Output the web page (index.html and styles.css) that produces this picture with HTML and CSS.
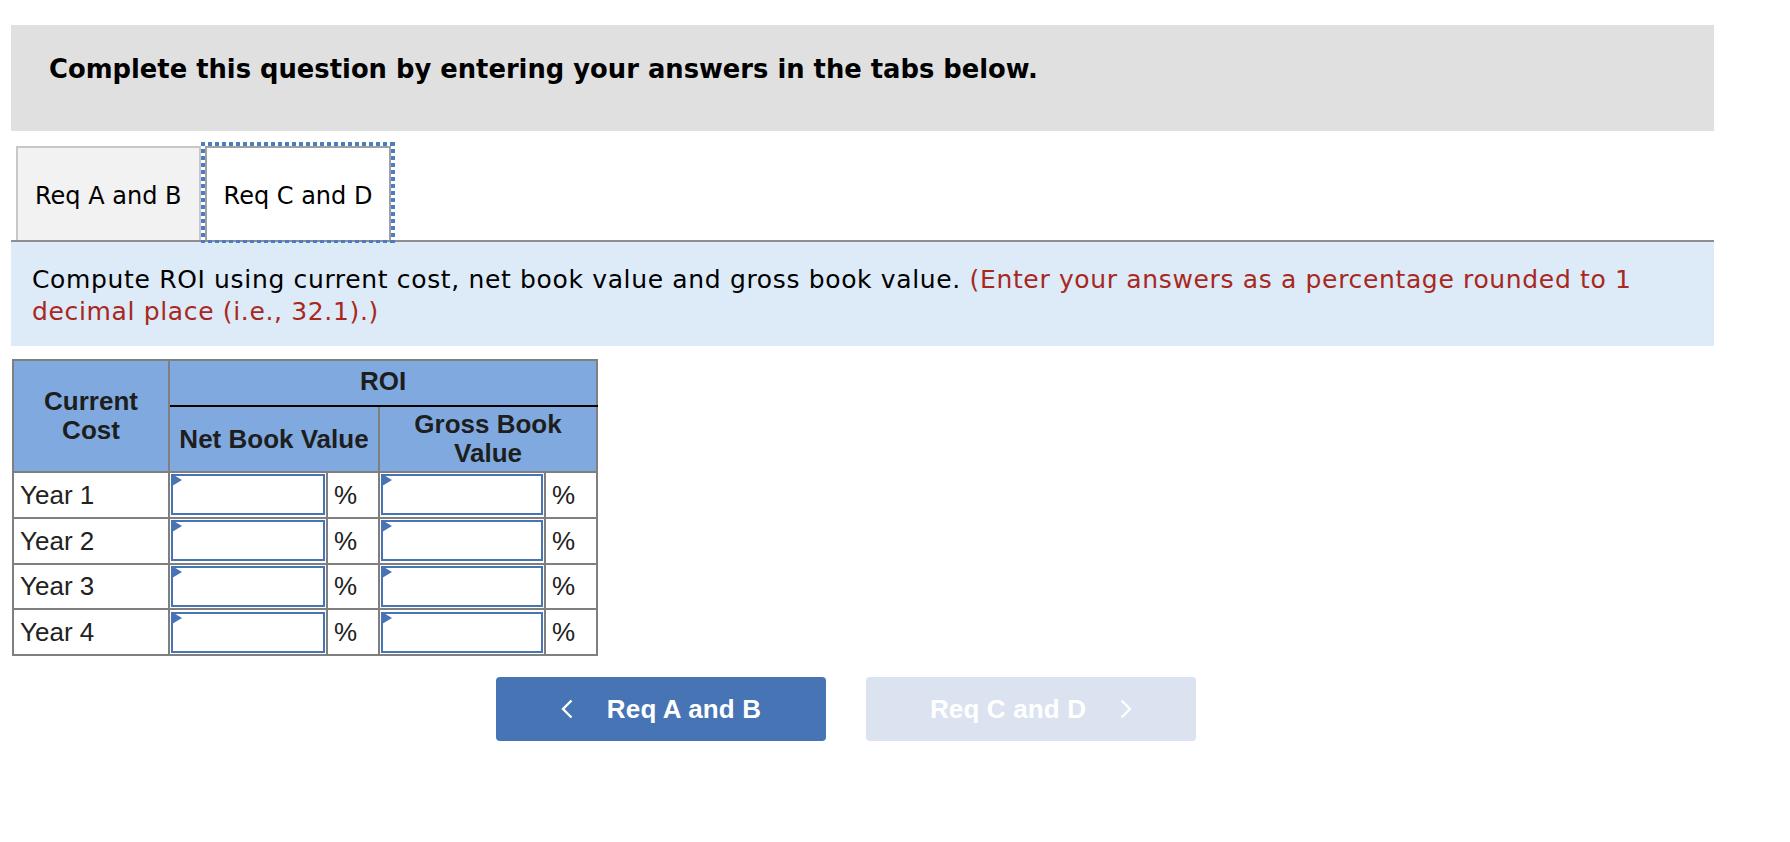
FILE: index.html
```html
<!DOCTYPE html>
<html lang="en">
<head>
<meta charset="utf-8">
<title>ROI</title>
<link rel="stylesheet" href="styles.css">
</head>
<body>
<div class="page">
  <div class="prompt">
    <h2 class="prompt-title">Complete this question by entering your answers in the tabs below.</h2>
  </div>

  <div class="tabs">
    <div class="tab">Req A and B</div>
    <div class="tab tab-active">Req C and D</div>
  </div>

  <div class="instructions">Compute ROI using current cost, net book value and gross book value. <span class="hint">(Enter your answers as a percentage rounded to 1 decimal place (i.e., 32.1).)</span></div>

  <table class="roi">
    <colgroup>
      <col class="c-label">
      <col class="c-input">
      <col class="c-pct">
      <col class="c-input2">
      <col class="c-pct">
    </colgroup>
    <thead>
      <tr class="hr1">
        <th rowspan="2">Current<br>Cost</th>
        <th colspan="4" class="h-roi">ROI</th>
      </tr>
      <tr class="hr2">
        <th colspan="2">Net Book Value</th>
        <th colspan="2">Gross Book<br>Value</th>
      </tr>
    </thead>
    <tbody>
      <tr>
        <td class="label">Year 1</td>
        <td class="inp"><span class="field"><input type="text" aria-label="Year 1 net book value"></span></td>
        <td class="pct">%</td>
        <td class="inp"><span class="field"><input type="text" aria-label="Year 1 gross book value"></span></td>
        <td class="pct">%</td>
      </tr>
      <tr>
        <td class="label">Year 2</td>
        <td class="inp"><span class="field"><input type="text" aria-label="Year 2 net book value"></span></td>
        <td class="pct">%</td>
        <td class="inp"><span class="field"><input type="text" aria-label="Year 2 gross book value"></span></td>
        <td class="pct">%</td>
      </tr>
      <tr>
        <td class="label">Year 3</td>
        <td class="inp"><span class="field"><input type="text" aria-label="Year 3 net book value"></span></td>
        <td class="pct">%</td>
        <td class="inp"><span class="field"><input type="text" aria-label="Year 3 gross book value"></span></td>
        <td class="pct">%</td>
      </tr>
      <tr>
        <td class="label">Year 4</td>
        <td class="inp"><span class="field"><input type="text" aria-label="Year 4 net book value"></span></td>
        <td class="pct">%</td>
        <td class="inp"><span class="field"><input type="text" aria-label="Year 4 gross book value"></span></td>
        <td class="pct">%</td>
      </tr>
    </tbody>
  </table>

  <div class="nav">
    <button class="nav-btn prev" type="button">
      <svg class="chev" width="12" height="20" viewBox="0 0 12 20"><polyline points="10.5,1.5 2,10 10.5,18.5" fill="none" stroke="#fff" stroke-width="2.4"/></svg>
      <span>Req A and B</span>
    </button>
    <button class="nav-btn next" type="button" disabled>
      <span>Req C and D</span>
      <svg class="chev" width="12" height="20" viewBox="0 0 12 20"><polyline points="1.5,1.5 10,10 1.5,18.5" fill="none" stroke="#fff" stroke-width="2.4"/></svg>
    </button>
  </div>
</div>
</body>
</html>
```

FILE: styles.css
```css
* {
  box-sizing: border-box;
}

body {
  margin: 0;
  background: #fff;
  color: #000;
  font-family: "DejaVu Sans", Verdana, sans-serif;
}

.page {
  margin-left: 11px;
  width: 1703px;
  padding-top: 25px;
}

.prompt {
  background: #e0e0e0;
  height: 106px;
  padding: 29px 0 0 38px;
}

.prompt-title {
  margin: 0;
  font-size: 25.8px;
  line-height: 30px;
  font-weight: bold;
}

.tabs {
  display: flex;
  height: 96px;
  margin-top: 15px;
  padding-left: 5px;
  border-bottom: 2px solid #8e8e8e;
}

.tab {
  display: flex;
  align-items: center;
  padding: 4px 17px 0;
  margin-right: 4px;
  border: 2px solid #c8c8c8;
  border-bottom: none;
  background: #f2f2f2;
  font-size: 24px;
  color: #000;
}

.tab-active {
  position: relative;
  background: #fff;
  border-color: #a0a0a0;
}

.tab-active::after {
  content: "";
  position: absolute;
  top: -6px;
  left: -6px;
  right: -6px;
  bottom: -3px;
  pointer-events: none;
  background:
    repeating-linear-gradient(to right, #4b7cc4 0 4px, transparent 4px 7px) top left / 100% 4px no-repeat,
    repeating-linear-gradient(to right, #4b7cc4 0 4px, transparent 4px 7px) bottom left / 100% 3px no-repeat,
    repeating-linear-gradient(to bottom, #4b7cc4 0 4px, transparent 4px 7px) top left / 4px 100% no-repeat,
    repeating-linear-gradient(to bottom, #4b7cc4 0 4px, transparent 4px 7px) top right / 4px 100% no-repeat;
}

.instructions {
  background: #ddeaf7;
  padding: 22px 22px 18px 21px;
  font-size: 25px;
  letter-spacing: 0.65px;
  line-height: 32px;
}

.hint {
  color: #a8281e;
}

.roi {
  margin-top: 13px;
  margin-left: 1px;
  border-collapse: collapse;
  table-layout: fixed;
  width: 586px;
  font-family: "Liberation Sans", Arial, sans-serif;
  font-size: 26px;
  color: #222;
}

.c-label { width: 156px; }
.c-input { width: 158px; }
.c-input2 { width: 166px; }
.c-pct { width: 52px; }

.roi th {
  background: #80aadf;
  border: 2px solid #7f7f7f;
  font-weight: bold;
  line-height: 29px;
  text-align: center;
  padding: 0;
  color: #1e1e1e;
}

.hr1 {
  height: 46px;
}

.roi .h-roi {
  border-bottom: 2px solid #000;
  padding-bottom: 4px;
}

.hr2 {
  height: 66px;
}

.roi td {
  border: 2px solid #7f7f7f;
  height: 45.75px;
  padding: 1px;
  line-height: 28px;
}

.roi .label {
  padding-left: 6px;
  text-align: left;
}

.roi .pct {
  padding-left: 6px;
  text-align: left;
}

.field {
  display: block;
  position: relative;
}

.field input {
  display: block;
  width: 100%;
  height: 41px;
  margin: 0;
  padding: 0 6px;
  border: 2px solid #4674b4;
  background: #fff;
  outline: none;
  font: 24px "Liberation Sans", Arial, sans-serif;
}

.field::before {
  content: "";
  position: absolute;
  left: 1px;
  top: 0;
  border-left: 10px solid #4674b4;
  border-top: 6px solid transparent;
  border-bottom: 6px solid transparent;
}

.nav {
  display: flex;
  gap: 40px;
  margin-top: 21px;
  padding-left: 485px;
}

.nav-btn {
  display: flex;
  align-items: center;
  justify-content: center;
  gap: 34px;
  width: 330px;
  height: 64px;
  border: none;
  border-radius: 4px;
  padding: 0;
  font-family: "Liberation Sans", Arial, sans-serif;
  font-weight: bold;
  font-size: 26px;
  letter-spacing: 0.15px;
  color: #fff;
}

.prev {
  background: #4674b4;
}

.next {
  background: #dae3ef;
}

.chev {
  display: block;
  flex: none;
}
```
